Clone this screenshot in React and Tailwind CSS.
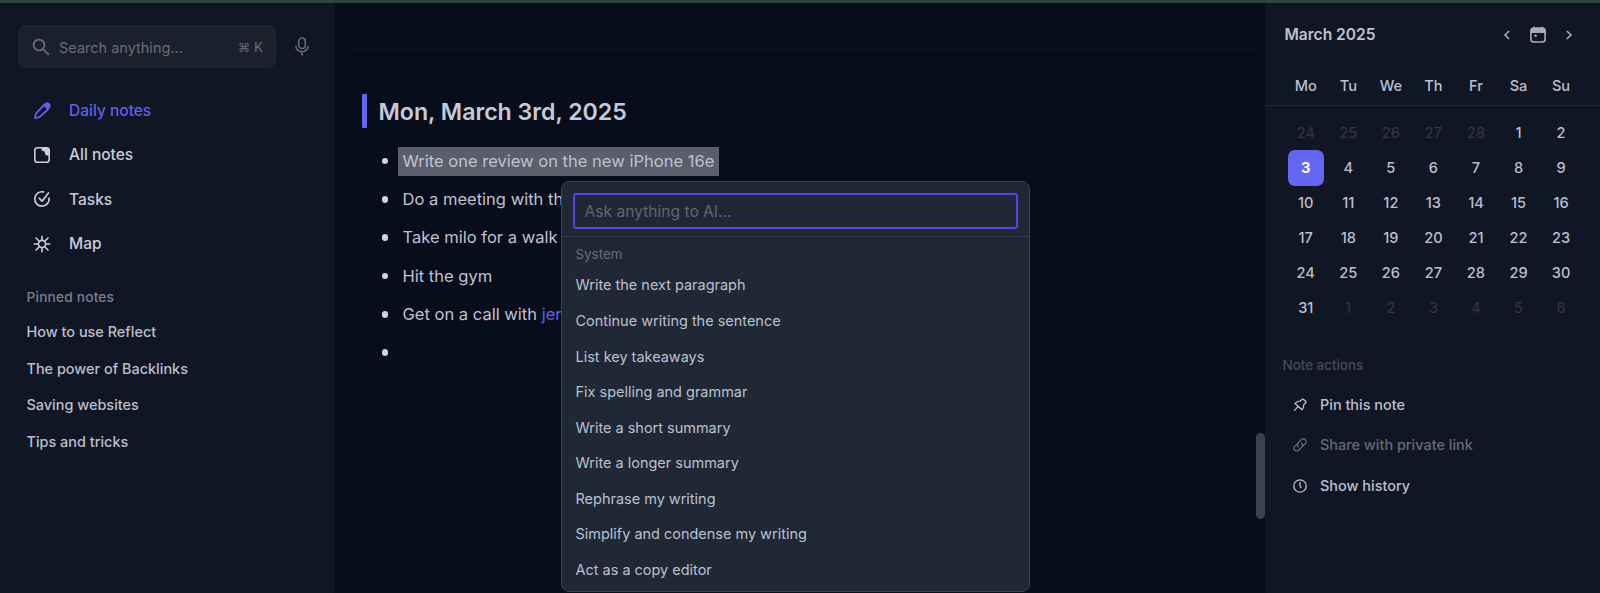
import React from "react";

const nav = [
  { label: "Daily notes", icon: PencilIcon, active: true },
  { label: "All notes", icon: NoteIcon },
  { label: "Tasks", icon: TaskIcon },
  { label: "Map", icon: MapIcon },
];

const pinned = ["How to use Reflect", "The power of Backlinks", "Saving websites", "Tips and tricks"];

const prompts = [
  "Write the next paragraph",
  "Continue writing the sentence",
  "List key takeaways",
  "Fix spelling and grammar",
  "Write a short summary",
  "Write a longer summary",
  "Rephrase my writing",
  "Simplify and condense my writing",
  "Act as a copy editor",
];

const weekdays = ["Mo", "Tu", "We", "Th", "Fr", "Sa", "Su"];

const days = [
  ...[24, 25, 26, 27, 28].map((n) => ({ n, muted: true })),
  ...Array.from({ length: 31 }, (_, i) => ({ n: i + 1, selected: i === 2 })),
  ...[1, 2, 3, 4, 5, 6].map((n) => ({ n, muted: true })),
];

function PencilIcon() {
  return (
    <svg width="18" height="18" viewBox="0 0 18 18" fill="none" stroke="currentColor" strokeWidth="1.8" strokeLinejoin="round">
      <path d="M1.900 16.100 2.900 11.600 10.600 3.300a3 3 0 0 1 4.200 4.200L6.600 15.200Z" />
      <path d="M9.800 3 11.600 1.500a3.200 3.200 0 0 1 5 4.600l-1.800 2.200Z" fill="currentColor" stroke="none" />
    </svg>
  );
}

function NoteIcon() {
  return (
    <svg width="18" height="18" viewBox="0 0 18 18" fill="none" stroke="currentColor" strokeWidth="1.6">
      <rect x="1.8" y="1.8" width="14.400" height="14.400" rx="2.800" />
      <path d="M8.500 1.500h5.500a2.800 2.800 0 0 1 2.800 2.800V9.500h-2.600a2.200 2.200 0 0 1-2.200-2.200A2.200 2.200 0 0 0 9.800 5.100 1.600 1.600 0 0 1 8.500 3.500Z" fill="currentColor" stroke="none" />
    </svg>
  );
}

function TaskIcon() {
  return (
    <svg width="18" height="18" viewBox="0 0 18 18" fill="none" stroke="currentColor" strokeWidth="1.7" strokeLinecap="round" strokeLinejoin="round">
      <path d="M10.400 1.900A7.200 7.200 0 1 0 16.100 8" />
      <path d="m6.200 8.200 2.800 3L15.500 2.900" />
    </svg>
  );
}

function MapIcon() {
  return (
    <svg width="18" height="18" viewBox="0 0 18 18" fill="none" stroke="currentColor" strokeWidth="1.6" strokeLinecap="round">
      <circle cx="9" cy="9" r="3.600" />
      <path d="M9 1.300v4M9 12.700v4M1.300 9h4M12.700 9h4M3 3l3.500 3.500M11.500 11.500 15 15M15 3l-3.500 3.500M6.500 11.500 3 15" />
    </svg>
  );
}

function SearchIcon() {
  return (
    <svg width="18" height="18" viewBox="0 0 18 18" fill="none" stroke="currentColor" strokeWidth="1.800" strokeLinecap="round">
      <circle cx="7" cy="7" r="5.400" />
      <path d="m11 11 5.300 5.300" />
    </svg>
  );
}

function MicIcon() {
  return (
    <svg width="14" height="19" viewBox="0 0 14 19" fill="none" stroke="currentColor" strokeWidth="1.600" strokeLinecap="round">
      <rect x="3.700" y="1" width="6.600" height="10.500" rx="3.300" />
      <path d="M1 9.500a6 5.200 0 0 0 12 0M7 14.800V18" />
    </svg>
  );
}

function Chevron({ flip }) {
  return (
    <svg width="8" height="12" viewBox="0 0 8 12" fill="none" stroke="currentColor" strokeWidth="1.600">
      <path d={flip ? "M1.800 2 6 6 1.800 10" : "M6.200 2 2 6l4.200 4"} />
    </svg>
  );
}

function CalendarIcon() {
  return (
    <svg width="18" height="18" viewBox="0 0 18 18" fill="none">
      <rect x="1.900" y="2.400" width="14.200" height="13.600" rx="2.800" stroke="currentColor" strokeWidth="1.600" />
      <path d="M1.500 6.900V4.300A2.800 2.800 0 0 1 4 1.500V.7h1.700v.8h6.600V.7H14v.8a2.800 2.800 0 0 1 2.500 2.800v2.600Z" fill="currentColor" />
      <rect x="5.400" y="8.500" width="2.300" height="2.300" rx=".6" fill="currentColor" />
    </svg>
  );
}

function PinIcon() {
  return (
    <svg width="14" height="14" viewBox="0 0 14 14" fill="none" stroke="currentColor" strokeWidth="1.300" strokeLinejoin="round" strokeLinecap="round">
      <path d="M7.200 3.100 9.200 1.300q.6-.5 1.200 0L12.600 3.300q.6.600.1 1.200L10.500 7.200q.6 2.500-1.500 4.500L2 5.400Q4.300 2.900 7.200 3.100ZM5 8.600 1.500 12.400" />
    </svg>
  );
}

function LinkIcon() {
  return (
    <svg width="14" height="14" viewBox="0 0 14 14" fill="none" stroke="currentColor" strokeWidth="1.300" strokeLinecap="round">
      <path d="M8.900 8.800 12.300 5.600a2.700 2.700 0 0 0-3.900-3.900L5.200 4.900a2.700 2.700 0 0 0 .1 3.900" />
      <path d="M5.100 5.200 1.700 8.400a2.700 2.700 0 0 0 3.900 3.900l3.200-3.200a2.700 2.700 0 0 0-.1-3.900" />
    </svg>
  );
}

function ClockIcon() {
  return (
    <svg width="14" height="14" viewBox="0 0 14 14" fill="none" stroke="currentColor" strokeWidth="1.300" strokeLinecap="round" strokeLinejoin="round">
      <circle cx="7" cy="7" r="6.200" />
      <path d="M7 3.500V7l1 1.600" />
    </svg>
  );
}

function Sidebar() {
  return (
    <aside className="w-[335px] shrink-0 bg-[#111624]">
      <div className="mt-[22px] ml-[18px] flex items-center">
        <div className="flex h-[43px] w-[258px] items-center rounded-lg border border-[#202532] bg-[#1b202d] pr-3 pl-[13px] text-[#686d79]">
          <SearchIcon />
          <span className="ml-[9px] pt-0.5 text-[14.500px]">Search anything...</span>
          <span className="ml-auto flex items-center gap-1 pt-0.5 text-[13.500px]">
            <span className="text-[12px]">⌘</span>K
          </span>
        </div>
        <div className="ml-[19px] text-[#686d79]">
          <MicIcon />
        </div>
      </div>
      <nav className="mt-[20.500px]">
        {nav.map(({ label, icon: Icon, active }) => (
          <div key={label} className={`flex h-[44.400px] items-center gap-[18px] pl-[33px] text-[15.500px] font-medium ${active ? "text-[#5f60ee]" : "text-[#c8ccdb]"}`}>
            <Icon />
            {label}
          </div>
        ))}
      </nav>
      <h2 className="mt-[20.500px] pl-[26.500px] text-[13.700px] leading-5 font-medium tracking-[0.200px] text-[#7b808f]">Pinned notes</h2>
      <ul className="mt-[7px]">
        {pinned.map((t) => (
          <li key={t} className="flex h-[36.700px] items-center pl-[26.500px] text-[14.450px] font-medium text-[#bbbfcd]">{t}</li>
        ))}
      </ul>
    </aside>
  );
}

function Bullet({ children }) {
  return (
    <li className="flex h-[38.300px] items-center pl-[46.500px] text-[16.550px] whitespace-nowrap text-[#bfc2d0]">
      <span className="mr-[14.500px] size-[6.500px] shrink-0 rounded-full bg-[#d0d3e4]" />
      {children}
    </li>
  );
}

function AskMenu() {
  return (
    <div className="absolute top-[178px] left-[226px] h-[411px] w-[469px] rounded-lg border border-[#3a4150] bg-[#202735]">
      <div className="border-b border-[#343c49] px-[11px] pt-[11px] pb-[7px]">
        <div className="flex h-[36px] items-center rounded-[3px] border-2 border-[#4f46e5] pt-px pl-[9.500px] text-[15.600px] text-[#5e6572]">Ask anything to AI...</div>
      </div>
      <div className="pt-[7px] pl-[13.500px] text-[13.400px] leading-5 text-[#666d79]">System</div>
      <ul className="mt-[3.500px]">
        {prompts.map((t) => (
          <li key={t} className="flex h-[35.560px] items-center pl-[13.500px] text-[14.470px] text-[#b9c1cf]">{t}</li>
        ))}
      </ul>
    </div>
  );
}

function Editor() {
  return (
    <main className="relative w-[930px] shrink-0 bg-[#080d1b]">
      <div className="mr-[8px] ml-[17px] h-[47px] border-b border-[#111623]" />
      <div className="mt-[44px] ml-[27px] flex h-[34px] items-center">
        <span className="h-full w-[5px] rounded-[1px] bg-[#6366f1]" />
        <h1 className="mt-[2px] ml-[11.500px] text-[23.150px] font-semibold text-[#c6c9d8]">Mon, March 3rd, 2025</h1>
      </div>
      <ul className="mt-[14px]">
        <Bullet>
          <span className="-ml-[5px] flex h-[29px] items-center bg-[#5a5f6b] pr-[5px] pl-[5px]">Write one review on the new iPhone 16e</span>
        </Bullet>
        <Bullet>Do a meeting with the</Bullet>
        <Bullet>Take milo for a walk</Bullet>
        <Bullet>Hit the gym</Bullet>
        <Bullet>
          Get on a call with&nbsp;<span className="text-[#5f60ee]">jerry</span>
        </Bullet>
        <Bullet />
      </ul>
      <AskMenu />
      <div className="absolute top-[430px] right-0 h-[86px] w-[9px] rounded-full bg-[#3a4150]" />
    </main>
  );
}

function Calendar() {
  return (
    <aside className="min-w-0 flex-1 bg-[#111624] text-[#bbbfcd]">
      <div className="flex h-[62px] items-center pl-[19.500px]">
        <h2 className="w-[218.500px] pt-0.5 text-[15.550px] font-semibold text-[#bfc2d0]">March 2025</h2>
        <div className="flex items-center gap-[18px] pt-px text-[#a9adba]">
          <Chevron />
          <CalendarIcon />
          <Chevron flip />
        </div>
      </div>
      <div className="ml-px grid h-[41px] grid-cols-[repeat(7,42.550px)] items-center border-b border-[#232834] pt-[3px] pl-[18.500px] text-center text-[14.600px] font-medium">
        {weekdays.map((d) => (
          <span key={d}>{d}</span>
        ))}
      </div>
      <div className="mt-[9.500px] ml-px grid auto-rows-[35px] grid-cols-[repeat(7,42.550px)] place-items-center pl-[18.500px] text-[14.600px] font-medium">
        {days.map(({ n, muted, selected }, i) => (
          <span
            key={i}
            className={
              selected
                ? "flex h-9 w-9 items-center justify-center rounded-[7px] bg-[#6366f1] pt-px font-bold text-white"
                : muted
                  ? "pt-px font-normal text-[#333844]"
                  : "pt-px"
            }
          >
            {n}
          </span>
        ))}
      </div>
      <h3 className="mt-[29.500px] pl-[17.500px] text-[13.400px] leading-5 font-medium text-[#474c58]">Note actions</h3>
      <ul className="mt-[9.500px] text-[14.450px] font-medium">
        <li className="flex h-[40.500px] items-center gap-[13px] pl-[28px]"><PinIcon />Pin this note</li>
        <li className="flex h-[40.500px] items-center gap-[13px] pl-[28px] text-[#646976]"><LinkIcon />Share with private link</li>
        <li className="flex h-[40.500px] items-center gap-[13px] pl-[28px]"><ClockIcon />Show history</li>
      </ul>
    </aside>
  );
}

export default function App() {
  return (
    <div className="flex h-[593px] w-[1600px] flex-col overflow-hidden bg-[#080d1b] font-['Inter',sans-serif]">
      <div className="h-[3px] shrink-0 bg-[#2c4540]" />
      <div className="flex min-h-0 flex-1">
        <Sidebar />
        <Editor />
        <Calendar />
      </div>
    </div>
  );
}
